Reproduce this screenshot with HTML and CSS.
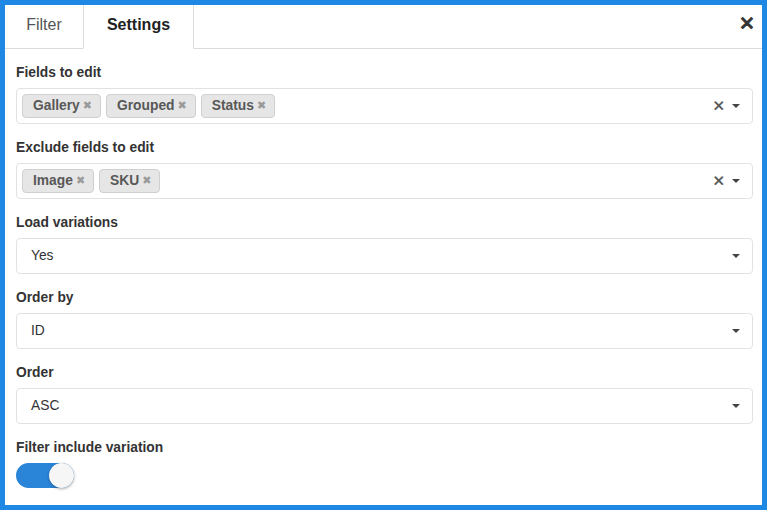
FILE: index.html
```html
<!DOCTYPE html>
<html>
<head>
<meta charset="utf-8">
<link rel="stylesheet" href="styles.css">
</head>
<body>
<div class="panel">
  <div class="tabs">
    <div class="tab">Filter</div>
    <div class="tab active">Settings</div>
    <div class="tab-fill"></div>
    <div class="close">&#x2715;</div>
  </div>
  <div class="body">
    <div class="field">
      <div class="label">Fields to edit</div>
      <div class="select multi">
        <div class="tags">
          <span class="tag">Gallery<span class="tx">&#x2716;</span></span>
          <span class="tag">Grouped<span class="tx">&#x2716;</span></span>
          <span class="tag">Status<span class="tx">&#x2716;</span></span>
        </div>
        <span class="clear">&#x2715;</span>
        <span class="arrow"></span>
      </div>
    </div>
    <div class="field">
      <div class="label">Exclude fields to edit</div>
      <div class="select multi">
        <div class="tags">
          <span class="tag">Image<span class="tx">&#x2716;</span></span>
          <span class="tag">SKU<span class="tx">&#x2716;</span></span>
        </div>
        <span class="clear">&#x2715;</span>
        <span class="arrow"></span>
      </div>
    </div>
    <div class="field">
      <div class="label">Load variations</div>
      <div class="select single"><span class="value">Yes</span><span class="arrow"></span></div>
    </div>
    <div class="field">
      <div class="label">Order by</div>
      <div class="select single"><span class="value">ID</span><span class="arrow"></span></div>
    </div>
    <div class="field">
      <div class="label">Order</div>
      <div class="select single"><span class="value">ASC</span><span class="arrow"></span></div>
    </div>
    <div class="field">
      <div class="label">Filter include variation</div>
      <div class="toggle"><span class="knob"></span></div>
    </div>
  </div>
</div>
</body>
</html>
```
FILE: styles.css
```css
* { box-sizing: border-box; }
html, body { margin: 0; padding: 0; background: #fff; }
body { font-family: "Liberation Sans", Arial, sans-serif; color: #333; }
.panel {
  width: 767px;
  height: 510px;
  border: 5px solid #1f88e5;
  background: #fff;
  display: flex;
  flex-direction: column;
}
.tabs {
  display: flex;
  height: 44px;
  align-items: stretch;
}
.tab {
  width: 78px;
  display: flex;
  align-items: center;
  justify-content: center;
  font-size: 16px;
  color: #555;
  border-bottom: 1px solid #dcdcdc;
  padding-bottom: 4px;
}
.tab.active {
  width: 111px;
  font-weight: bold;
  color: #222;
  border-left: 1px solid #dcdcdc;
  border-right: 1px solid #dcdcdc;
  border-bottom: 1px solid transparent;
}
.tab-fill { flex: 1; border-bottom: 1px solid #dcdcdc; }
.close {
  width: 28px;
  border-bottom: 1px solid #dcdcdc;
  display: flex;
  align-items: center;
  justify-content: center;
  font-size: 19px;
  font-weight: bold;
  color: #333;
  padding-bottom: 8px;
  font-family: "DejaVu Sans", sans-serif;
  -webkit-text-stroke: 1px #333;
  padding-right: 2px;
}
.body {
  padding: 15px 9px 0 11px;
  display: flex;
  flex-direction: column;
  gap: 15px;
}
.label {
  font-size: 13.8px;
  font-weight: bold;
  line-height: 18px;
  color: #333;
  margin-bottom: 6px;
}
.select {
  height: 36px;
  border: 1px solid #e2e2e2;
  border-radius: 4px;
  display: flex;
  align-items: center;
  padding-right: 12px;
}
.tags { flex: 1; display: flex; gap: 5px; padding-left: 5px; padding-bottom: 1px; }
.tag {
  height: 24px;
  display: inline-flex;
  align-items: center;
  padding: 0 8px 0 10px;
  background: #e6e6e6;
  border: 1px solid #cfcfcf;
  border-radius: 4px;
  font-size: 13.8px;
  font-weight: bold;
  color: #585858;
}
.tx {
  font-size: 11px;
  color: #9a9a9a;
  margin-left: 3px;
  font-family: "DejaVu Sans", sans-serif;
}
.clear {
  font-size: 15px;
  color: #555;
  font-family: "DejaVu Sans", sans-serif;
  margin-right: 7px;
  -webkit-text-stroke: 0.3px #555;
}
.arrow {
  width: 0; height: 0;
  border-left: 4px solid transparent;
  border-right: 4px solid transparent;
  border-top: 4px solid #444;
}
.single .value { flex: 1; padding-left: 14px; font-size: 13.8px; color: #333; padding-bottom: 2px; }
.toggle {
  width: 58px;
  height: 25px;
  border-radius: 13px;
  background: #2a85d8;
  position: relative;
}
.knob {
  position: absolute;
  right: 0; top: 0;
  width: 25px; height: 25px;
  border-radius: 50%;
  background: #f6f6f6;
  box-shadow: 0 1px 3px rgba(0,0,0,0.35);
}
```
